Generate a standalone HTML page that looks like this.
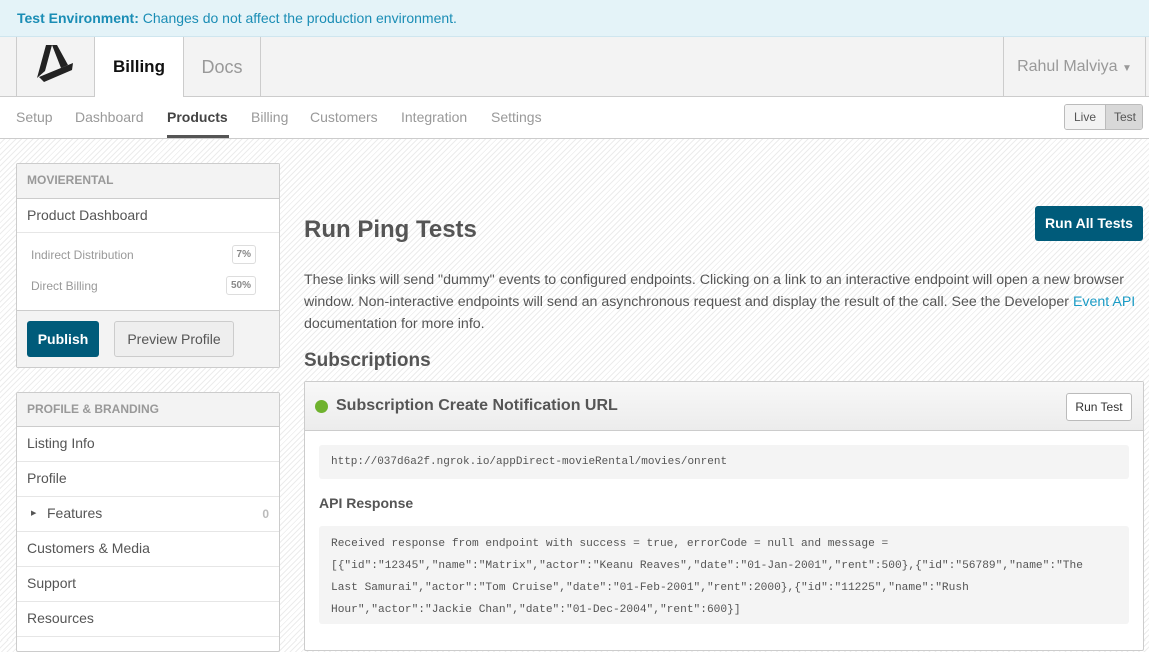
<!DOCTYPE html>
<html><head><meta charset="utf-8"><style>
*{box-sizing:border-box;margin:0;padding:0}
body{width:1149px;height:640px;overflow:hidden;font-family:"Liberation Sans",Arial,sans-serif;color:#555;position:relative;
background:#fff repeating-linear-gradient(-45deg,#fff 0,#fff 3px,#ececec 3px,#ececec 4px);}
.abs{position:absolute}
.banner{left:0;top:0;width:1149px;height:37px;background:#e4f3f8;border-bottom:1px solid #cfe6ef;font-size:14px;color:#1a8db5;padding:10px 17px}
.header{left:0;top:37px;width:1149px;height:60px;background:#f3f3f3;border-bottom:1px solid #ccc}
.cell{position:absolute;top:0;height:60px;border-left:1px solid #ccc;font-size:18px;text-align:center;line-height:60px}
.subnav{left:0;top:97px;width:1149px;height:42px;background:#fff;border-bottom:1px solid #ccc;font-size:14px;color:#999}
.subnav span{position:absolute;top:12px}
.panel{position:absolute;left:16px;width:264px;background:#fff;border:1px solid #ccc;border-radius:2px}
.ph{height:35px;background:#f3f3f3;border-bottom:1px solid #ccc;font-size:12px;font-weight:bold;color:#999;padding:9px 10px}
.item{height:35px;border-bottom:1px solid #e6e6e6;font-size:14px;color:#555;padding:8px 10px}
.badge{position:absolute;right:23px;border:1px solid #ddd;border-radius:3px;font-size:10px;font-weight:bold;color:#888;padding:3px 4px}
.mono{font-family:"Liberation Mono",monospace;color:#555;white-space:pre}
</style></head><body>
<div class="abs banner"><b>Test Environment:</b> Changes do not affect the production environment.</div>
<div class="abs header">
 <div class="cell" style="left:16px;width:78px"></div>
 <div class="cell" style="left:94px;width:89px;background:#fff;height:61px;color:#111;font-weight:bold;font-size:17px">Billing</div>
 <div class="cell" style="left:183px;width:77px;color:#999">Docs</div>
 <div class="cell" style="left:260px;width:0"></div>
 <div class="cell" style="left:1003px;width:143px;border-right:1px solid #ccc;color:#999;font-size:16px">Rahul Malviya <span style="font-size:10px">▼</span></div>
</div>
<svg class="abs" style="left:0;top:0" width="100" height="100" viewBox="0 0 100 100">
 <polygon points="46,45 52,45 45,71 37,78" fill="#222"/>
 <polygon points="52,45 57,45 68,65 61,68" fill="#222"/>
 <polygon points="39,77 73,63 72,70 44,82" fill="#222"/>
</svg>
<div class="abs subnav">
 <span style="left:16px">Setup</span><span style="left:75px">Dashboard</span>
 <span style="left:167px;color:#444;font-weight:bold">Products</span>
 <div class="abs" style="left:167px;top:38px;width:62px;height:3px;background:#555"></div>
 <span style="left:251px">Billing</span><span style="left:310px">Customers</span><span style="left:401px">Integration</span><span style="left:491px">Settings</span>
 <div class="abs" style="left:1064px;top:7px;width:79px;height:26px;border:1px solid #bbb;border-radius:3px;overflow:hidden;font-size:12px;color:#555">
  <div class="abs" style="left:0;top:0;width:40px;height:24px;background:#f3f3f3;text-align:center;line-height:24px">Live</div>
  <div class="abs" style="left:40px;top:0;width:39px;height:24px;background:#d8d8d8;border-left:1px solid #bbb;text-align:center;line-height:24px">Test</div>
 </div>
</div>

<div class="panel" style="top:163px">
 <div class="ph">MOVIERENTAL</div>
 <div class="item" style="height:34px">Product Dashboard</div>
 <div style="height:78px;position:relative;font-size:12px;color:#999;border-bottom:1px solid #ccc">
  <div class="abs" style="left:14px;top:15px">Indirect Distribution</div><div class="badge" style="top:12px">7%</div>
  <div class="abs" style="left:14px;top:46px">Direct Billing</div><div class="badge" style="top:43px">50%</div>
 </div>
 <div style="height:56px;background:#f3f3f3;position:relative">
  <div class="abs" style="left:10px;top:10px;width:72px;height:36px;background:#005b7a;border-radius:3px;color:#fff;font-weight:bold;font-size:14px;text-align:center;line-height:36px">Publish</div>
  <div class="abs" style="left:97px;top:10px;width:120px;height:36px;background:#eee;border:1px solid #ccc;border-radius:3px;color:#555;font-size:14px;text-align:center;line-height:34px">Preview Profile</div>
 </div>
</div>

<div class="panel" style="top:392px;height:260px">
 <div class="ph" style="height:34px">PROFILE &amp; BRANDING</div>
 <div class="item">Listing Info</div>
 <div class="item">Profile</div>
 <div class="item" style="position:relative;padding-left:30px"><span class="abs" style="left:14px;top:12px;font-size:7px">▶</span>Features<span class="abs" style="right:10px;color:#bbb;font-size:12px;top:10px;font-weight:bold">0</span></div>
 <div class="item">Customers &amp; Media</div>
 <div class="item">Support</div>
 <div class="item">Resources</div>
</div>

<div class="abs" style="left:304px;top:216px;font-size:24px;font-weight:bold;color:#555">Run Ping Tests</div>
<div class="abs" style="left:1035px;top:206px;width:108px;height:35px;background:#005b7a;border-radius:3px;color:#fff;font-weight:bold;font-size:14px;text-align:center;line-height:35px">Run All Tests</div>
<div class="abs" style="left:304px;top:269px;width:842px;font-size:14.2px;line-height:22px;color:#555">These links will send "dummy" events to configured endpoints. Clicking on a link to an interactive endpoint will open a new browser window. Non-interactive endpoints will send an asynchronous request and display the result of the call. See the Developer <span style="color:#1a9bc5">Event API</span> documentation for more info.</div>
<div class="abs" style="left:304px;top:350px;font-size:19px;font-weight:bold;color:#555">Subscriptions</div>

<div class="abs" style="left:304px;top:381px;width:840px;height:270px;background:#fff;border:1px solid #ccc;border-radius:2px">
 <div style="height:49px;background:linear-gradient(#f8f8f8,#ececec);border-bottom:1px solid #ccc;position:relative">
  <div class="abs" style="left:10px;top:18px;width:13px;height:13px;border-radius:50%;background:#6fb22e"></div>
  <div class="abs" style="left:31px;top:15px;font-size:16px;font-weight:bold;color:#555">Subscription Create Notification URL</div>
  <div class="abs" style="left:761px;top:11px;width:66px;height:28px;background:#fff;border:1px solid #bbb;border-radius:3px;font-size:12px;color:#333;text-align:center;line-height:26px">Run Test</div>
 </div>
 <div class="abs mono" style="left:14px;top:63px;width:810px;height:34px;background:#f4f4f4;border-radius:3px;font-size:11px;padding:11px 12px">http://037d6a2f.ngrok.io/appDirect-movieRental/movies/onrent</div>
 <div class="abs" style="left:14px;top:113px;font-size:14px;font-weight:bold;color:#555">API Response</div>
 <div class="abs mono" style="left:14px;top:144px;width:810px;height:98px;background:#f4f4f4;border-radius:3px;font-size:11.2px;line-height:22px;padding:7px 12px">Received response from endpoint with success = true, errorCode = null and message =
[{"id":"12345","name":"Matrix","actor":"Keanu Reaves","date":"01-Jan-2001","rent":500},{"id":"56789","name":"The
Last Samurai","actor":"Tom Cruise","date":"01-Feb-2001","rent":2000},{"id":"11225","name":"Rush
Hour","actor":"Jackie Chan","date":"01-Dec-2004","rent":600}]</div>
</div>
</body></html>
